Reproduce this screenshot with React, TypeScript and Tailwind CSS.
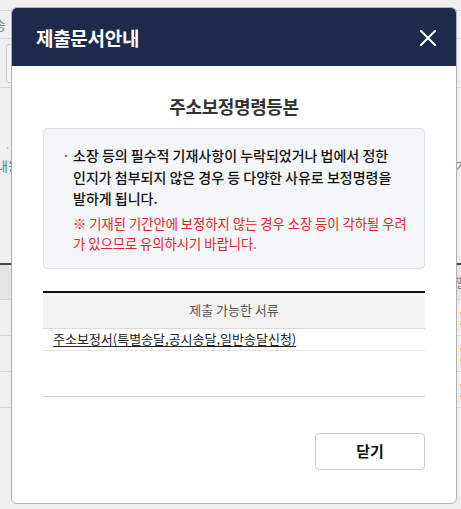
import React from "react";

const KR = { fontFamily: '"Noto Sans CJK KR", "Noto Sans", sans-serif' };

function Background() {
  return (
    <div className="w-[461px] h-[509px] bg-[#efefef] flex flex-col text-[13px] text-[#666]" style={KR}>
      <div className="h-[11px] border-b border-[#d6d6d6]" />
      <div className="h-[28px] border-b border-[#d6d6d6] flex items-center justify-between">
        <span className="-ml-[6px] text-[#777]">송</span>
        <span />
      </div>
      <div className="h-[49px] border-b border-[#d6d6d6] flex items-center pl-[6px]">
        <div className="w-[60px] h-[39px] border border-[#c4c4c4] rounded-[3px] bg-[#f4f4f4]" />
      </div>
      <div className="h-[175px] flex flex-col">
        <div className="h-[56px]" />
        <div className="flex justify-between text-[#aaa] leading-[8px]">
          <span className="ml-[4px]">··</span>
          <span />
        </div>
        <div className="flex justify-between mt-[4px]">
          <span className="-ml-[4px] text-[#5577aa]">내용</span>
          <span className="mr-[-6px] text-[#888]">가</span>
        </div>
      </div>
      <div className="h-[2px] bg-[#444]" />
      <div className="h-[35px] bg-[#e4e4e4] border-b border-[#d6d6d6] flex items-center justify-end">
        <span className="mr-[-6px] text-[#888]">별</span>
      </div>
      {[0, 1, 2].map((i) => (
        <div key={i} className="h-[36px] border-b border-[#d6d6d6] flex items-center justify-end">
          <span className="mr-[-3px] text-[#e08a2a]">)</span>
        </div>
      ))}
    </div>
  );
}

export default function App() {
  return (
    <div className="relative w-[461px] h-[509px] overflow-hidden" style={KR}>
      <Background />
      <div className="absolute left-[11px] top-[7px] w-[446px] h-[497px] bg-white border border-[#b0b0b0] rounded-[6px] overflow-hidden flex flex-col">
        <div className="h-[58px] bg-[#1e2a4c] flex items-center justify-between pl-[24px] pr-[20px] shrink-0">
          <span className="text-white text-[19px] font-bold tracking-[-0.3px] leading-none mt-[1px]">제출문서안내</span>
          <svg width="16" height="16" viewBox="0 0 16 16" className="mt-[1px]">
            <path d="M1 1 L15 15 M15 1 L1 15" stroke="white" strokeWidth="2" strokeLinecap="square" />
          </svg>
        </div>
        <div className="flex flex-col px-[31px] pt-[29px]">
          <div className="text-center text-[18px] font-semibold tracking-[-0.4px] text-[#333] leading-[22px]">
            주소보정명령등본
          </div>
          <div className="mt-[11px] bg-[#f5f6f8] border border-[#dde0e6] rounded-[4px] pl-[18px] pr-[6px] pt-[16px] pb-[14px]">
            <div className="flex text-[14px] leading-[21.5px] text-[#111] font-medium whitespace-nowrap">
              <span className="w-[11px] shrink-0 text-[#666]">·</span>
              <span>
                소장 등의 필수적 기재사항이 누락되었거나 법에서 정한
                <br />
                인지가 첨부되지 않은 경우 등 다양한 사유로 보정명령을
                <br />
                발하게 됩니다.
              </span>
            </div>
            <div className="pl-[11px] mt-[4px] text-[13.3px] leading-[20px] text-[#e4232b] whitespace-nowrap">
              ※ 기재된 기간안에 보정하지 않는 경우 소장 등이 각하될 우려
              <br />가 있으므로 유의하시기 바랍니다.
            </div>
          </div>
          <div className="mt-[22px] border-t-2 border-[#111]">
            <div className="h-[36px] bg-[#f4f4f4] border-b border-[#dcdcdc] flex items-center justify-center text-[13px] text-[#555]">
              제출 가능한 서류
            </div>
            <div className="h-[22px] border-b border-[#e4e4e4] flex items-center pl-[10px] text-[13px] text-[#222]">
              <span className="underline underline-offset-2">주소보정서(특별송달,공시송달,일반송달신청)</span>
            </div>
            <div className="h-[46px] border-b border-[#d4d4d4]" />
          </div>
          <div className="flex justify-end mt-[36px]">
            <button className="w-[110px] h-[37px] border border-[#d0d0d0] rounded-[4px] bg-white text-[15px] font-bold text-[#111] flex items-center justify-center">
              닫기
            </button>
          </div>
        </div>
      </div>
    </div>
  );
}
